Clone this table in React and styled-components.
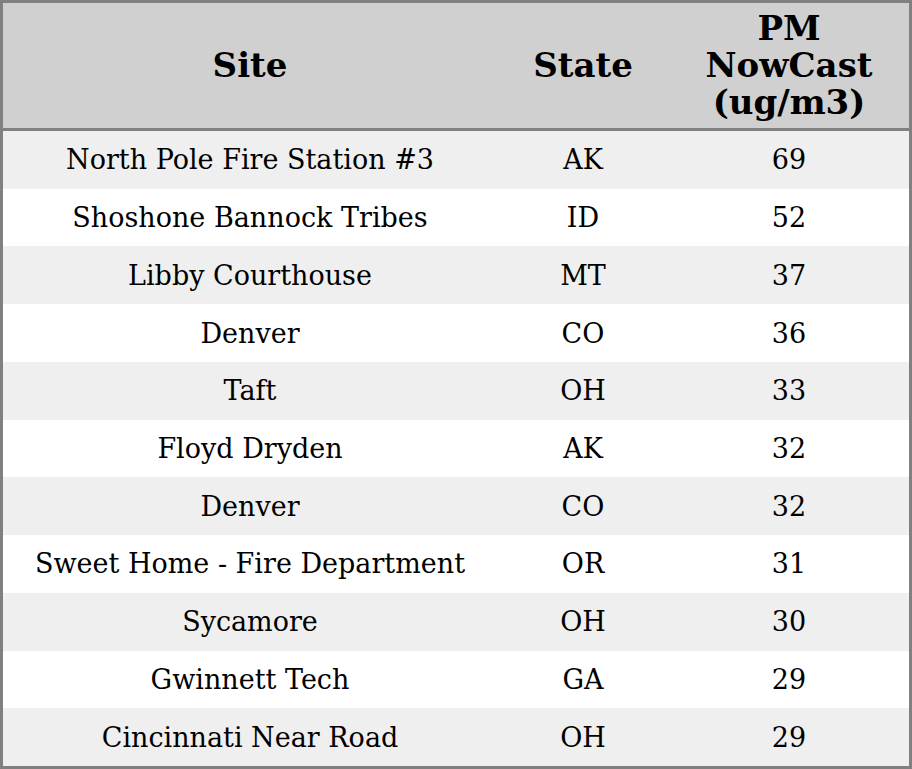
import React from "react";
import styled, { createGlobalStyle } from "styled-components";

const GlobalStyle = createGlobalStyle`
  html, body {
    margin: 0;
    padding: 0;
    background: #ffffff;
  }
  body {
    font-family: "DejaVu Serif", serif;
  }
`;

const Table = styled.div`
  box-sizing: border-box;
  width: 912px;
  height: 769px;
  border: 3px solid #808080;
  display: grid;
  grid-template-rows: 128px 1fr;
`;

const Columns = styled.div`
  display: grid;
  grid-template-columns: 494px 172px 1fr;
  align-items: center;
  text-align: center;
`;

const HeaderRow = styled(Columns)`
  background: #d0d0d0;
  border-bottom: 3px solid #808080;
  font-weight: bold;
  font-size: 34px;
  line-height: 37px;
  color: #000;
`;

const Body = styled.div`
  display: grid;
  grid-template-rows: repeat(11, 1fr);
`;

const Row = styled(Columns)`
  background: ${(p) => (p.$odd ? "#efefef" : "#ffffff")};
  font-size: 27px;
  color: #000;
`;

const Cell = styled.div`
  padding: 0 8px;
`;

const rows = [
  ["North Pole Fire Station #3", "AK", 69],
  ["Shoshone Bannock Tribes", "ID", 52],
  ["Libby Courthouse", "MT", 37],
  ["Denver", "CO", 36],
  ["Taft", "OH", 33],
  ["Floyd Dryden", "AK", 32],
  ["Denver", "CO", 32],
  ["Sweet Home - Fire Department", "OR", 31],
  ["Sycamore", "OH", 30],
  ["Gwinnett Tech", "GA", 29],
  ["Cincinnati Near Road", "OH", 29],
];

function App() {
  return (
    <>
      <GlobalStyle />
      <Table>
        <HeaderRow>
          <Cell>Site</Cell>
          <Cell>State</Cell>
          <Cell>
            PM
            <br />
            NowCast
            <br />
            (ug/m3)
          </Cell>
        </HeaderRow>
        <Body>
          {rows.map(([site, state, pm], i) => (
            <Row key={i} $odd={i % 2 === 0}>
              <Cell>{site}</Cell>
              <Cell>{state}</Cell>
              <Cell>{pm}</Cell>
            </Row>
          ))}
        </Body>
      </Table>
    </>
  );
}

export default App;
